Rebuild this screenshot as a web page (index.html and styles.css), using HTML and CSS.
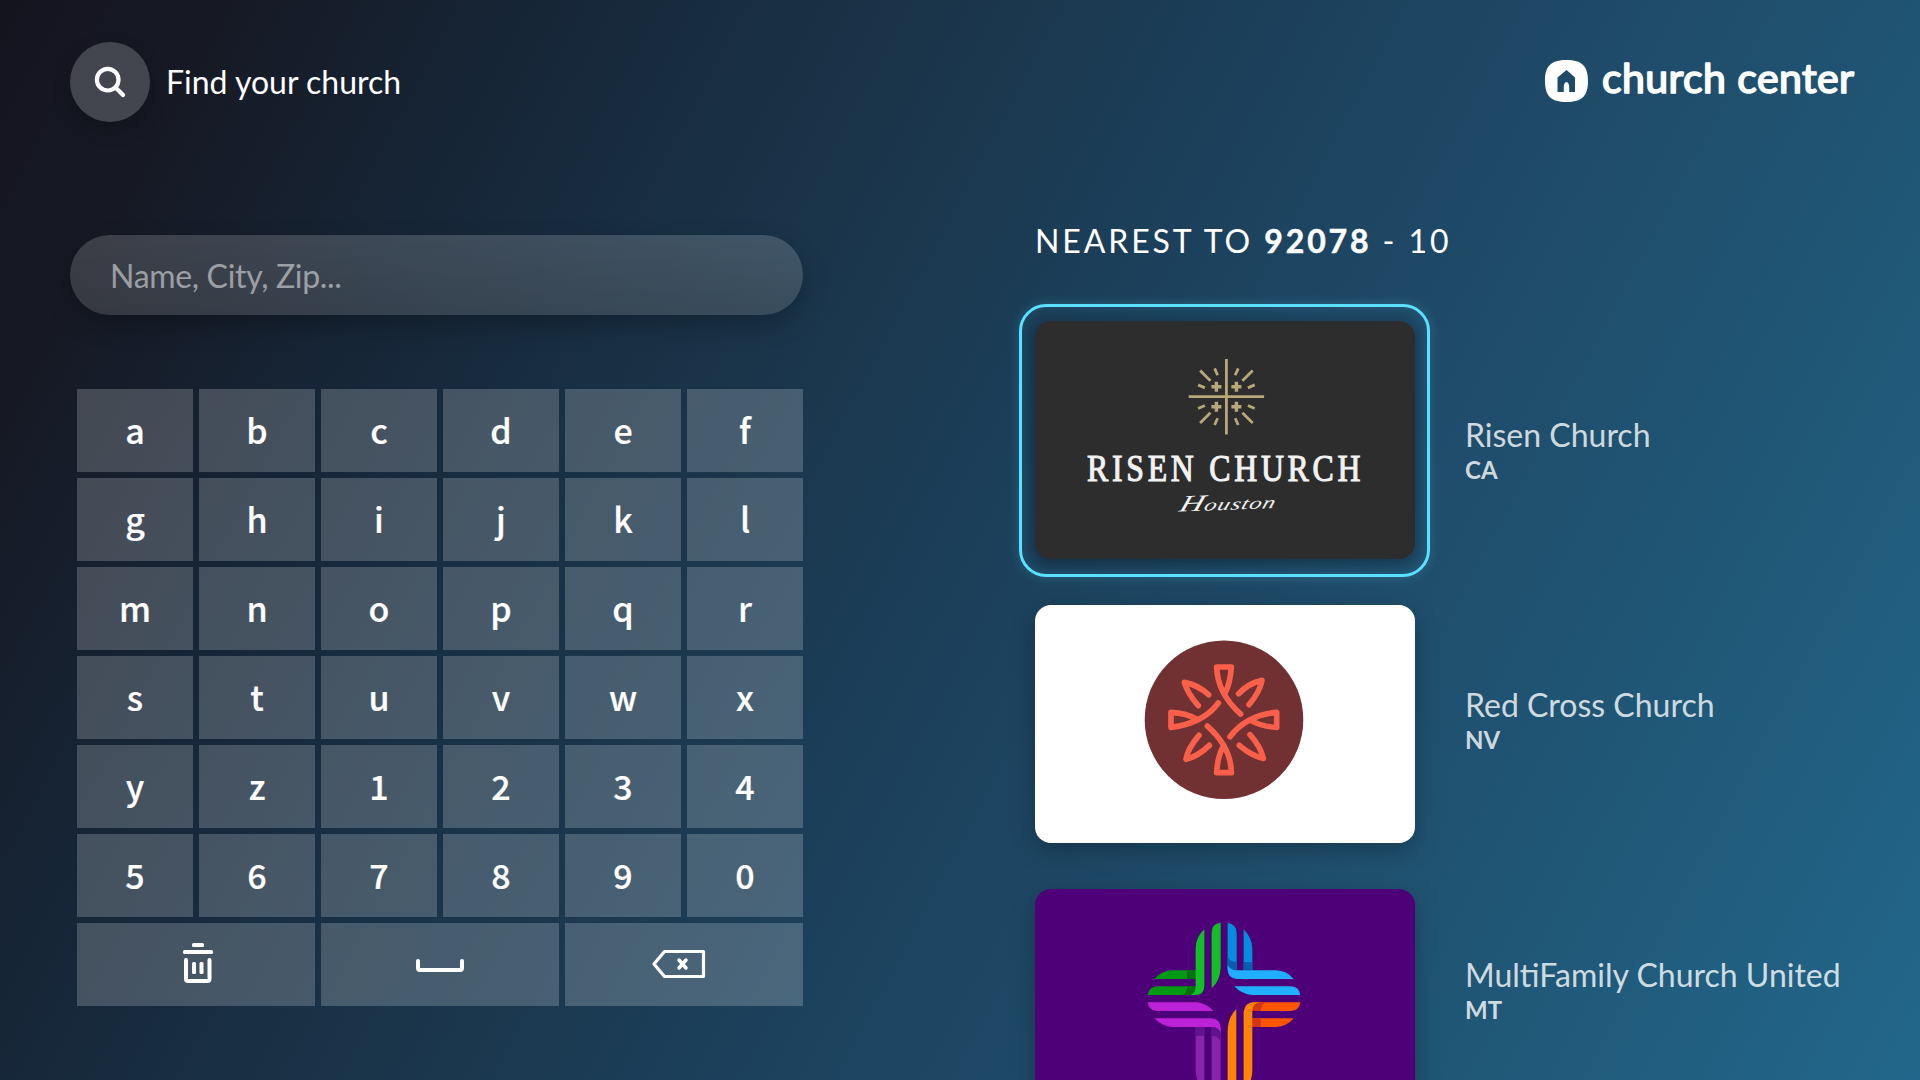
FILE: index.html
```html
<!DOCTYPE html>
<html lang="en">
<head>
<meta charset="utf-8">
<title>Find your church</title>
<link rel="stylesheet" href="styles.css">
</head>
<body>
<div class="screen">
  <header class="topbar">
    <div class="finder">
      <span class="finder-button">
        <svg width="80" height="80" viewBox="0 0 80 80" fill="none" stroke="#fff" stroke-width="4.2" stroke-linecap="round"><circle cx="37.7" cy="37.7" r="10.8"/><path d="M45.8 45.8L53 53"/></svg>
      </span>
      <span class="finder-title">Find your church</span>
    </div>
    <svg class="brand" width="312" height="44" viewBox="0 0 312 44">
      <path fill="#fff" fill-rule="evenodd" d="M21.5 0C37 0 43 6 43 21S37 42 21.500 42S0 36 0 21S6 0 21.500 0ZM21.500 10L12.500 17.500V32H18.800V26C18.800 24 20.500 22 21.500 22S24.200 24 24.200 26V32H30V17.500Z"/>
      <text class="brand-name" x="57" y="32.500" textLength="252" lengthAdjust="spacing">church center</text>
    </svg>
  </header>

  <main class="content">
    <section class="search">
      <div class="search-field">Name, City, Zip...</div>
      <div class="keyboard">
        <span class="key">a</span><span class="key">b</span><span class="key">c</span><span class="key">d</span><span class="key">e</span><span class="key">f</span>
        <span class="key">g</span><span class="key">h</span><span class="key">i</span><span class="key">j</span><span class="key">k</span><span class="key">l</span>
        <span class="key">m</span><span class="key">n</span><span class="key">o</span><span class="key">p</span><span class="key">q</span><span class="key">r</span>
        <span class="key">s</span><span class="key">t</span><span class="key">u</span><span class="key">v</span><span class="key">w</span><span class="key">x</span>
        <span class="key">y</span><span class="key">z</span><span class="key">1</span><span class="key">2</span><span class="key">3</span><span class="key">4</span>
        <span class="key">5</span><span class="key">6</span><span class="key">7</span><span class="key">8</span><span class="key">9</span><span class="key">0</span>
        <span class="key key-wide">
          <svg width="238" height="83" viewBox="0 0 238 83" fill="#fff"><rect x="115" y="20" width="12" height="4" rx="1.500"/><rect x="106" y="27" width="30" height="4" rx="1.500"/><path fill="none" stroke="#fff" stroke-width="4" stroke-linecap="round" stroke-linejoin="round" d="M109 37V56Q109 58 111 58H130.500Q132.500 58 132.500 56V37"/><rect x="115" y="39" width="4" height="12" rx="1.500"/><rect x="122.500" y="39" width="4" height="12" rx="1.500"/></svg>
        </span>
        <span class="key key-wide">
          <svg width="238" height="83" viewBox="0 0 238 83" fill="none" stroke="#fff" stroke-width="4" stroke-linecap="round" stroke-linejoin="round"><path d="M97 38V45Q97 47 99 47H139Q141 47 141 45V38"/></svg>
        </span>
        <span class="key key-wide">
          <svg width="238" height="83" viewBox="0 0 238 83" fill="none" stroke="#fff" stroke-width="3.200" stroke-linecap="round" stroke-linejoin="round"><path d="M89 41L99.500 28.500H138.500V53.500H99.500Z"/><path stroke-width="3.500" d="M114 37L121 45M121 37L114 45"/></svg>
        </span>
      </div>
    </section>

    <section class="results">
      <h1 class="results-title">NEAREST TO <b>92078</b> - 10</h1>
      <div class="results-body">
        <div class="cards">
          <div class="card card-risen card-focused">
            <svg width="380" height="238" viewBox="0 0 380 238">
              <defs>
                <g id="rays"><path stroke-width="3.400" d="M10 -15V-5M5 -10H15"/><path d="M16 -16L26.300 -26.300M8.800 -21.500L11.800 -28.300M21.500 -8.800L28.300 -11.800"/></g>
              </defs>
              <g transform="translate(191.400 75.700)" stroke="#b5a879" stroke-width="2.800">
                <path d="M0 -37.700V37.700M-37.700 0H37.700"/>
                <use href="#rays"/><use href="#rays" transform="scale(-1 1)"/><use href="#rays" transform="scale(1 -1)"/><use href="#rays" transform="scale(-1 -1)"/>
              </g>
              <text class="risen-name" transform="translate(52 160) scale(.860 1)" textLength="318" lengthAdjust="spacing">RISEN CHURCH</text>
              <text class="risen-city" transform="translate(143 190.500) rotate(-2) skewX(-20) scale(1.450 1)" textLength="66" lengthAdjust="spacing"><tspan class="risen-initial">H</tspan>ouston</text>
            </svg>
          </div>
          <div class="card card-red">
            <svg width="380" height="238" viewBox="0 0 380 238">
              <circle cx="189" cy="114.700" r="79.300" fill="#713031"/>
              <g transform="translate(189 114.700) scale(.3333) translate(-282 -269)" fill="none" stroke="#fa5f49" stroke-width="17" stroke-linecap="round" stroke-linejoin="round">
                <path d="M284 192Q301 160 304 111H260Q262 190 332 252"/>
                <path d="M203 269Q170 249 123 247V292Q220 280 265 219"/>
                <path d="M362 271Q395 290 440 292V247Q350 255 300 320"/>
                <path d="M281 347Q262 380 260 428H304Q303 350 232 288"/>
                <path d="M236 194Q205 165 163 157Q172 190 205 227"/>
                <path d="M326 191Q355 160 396 151Q390 185 357 224"/>
                <path d="M238 346Q205 378 168 388Q173 355 207 316"/>
                <path d="M328 346Q365 378 400 385Q392 350 360 314"/>
              </g>
            </svg>
          </div>
          <div class="card card-multi">
            <svg width="380" height="238" viewBox="0 0 380 238">
              <g transform="scale(.3333) translate(-45 -57)">
                <path fill="#029a14" d="M403 327Q425 301 460 301H527V327ZM383 375Q386 349 415 349H527V375Z"/>
                <path fill="#017010" d="M501 301H527V327H501ZM527 349V375H487Q501 367 502 349Z"/>
                <path fill="#10c126" d="M553 178V348Q553 375 525 375H513Q527 367 527 350V235Q527 203 553 178ZM602 158V290Q602 330 575 355V190Q575 160 602 158Z"/>
                <path fill="#008ede" d="M623 158Q650 162 650 190V301H623ZM671 178Q697 205 697 235V301H671Z"/>
                <path fill="#005fae" d="M623 260Q630 276 650 276V301H623ZM671 276H697V301H671Z"/>
                <path fill="#21aeff" d="M623 285Q630 301 650 301H768Q800 302 821 327H650Q623 325 623 298ZM643 349H812Q838 350 841 375H697Q665 373 643 349Z"/>
                <path fill="#8823ab" d="M527 471H553V660Q527 640 527 600ZM575 471H602V660H575Z"/>
                <path fill="#64118f" d="M527 471H553V497H527ZM575 471H602V515Q595 497 575 497Z"/>
                <path fill="#bb22d8" d="M383 397H530Q560 400 581 423H410Q385 420 383 397ZM403 445H575Q602 448 602 475V487Q595 471 575 471H455Q425 468 403 445Z"/>
                <path fill="#ff5500" d="M697 397H841Q838 422 812 423H697ZM697 445H821Q800 470 768 471H697Z"/>
                <path fill="#d1351b" d="M697 397H740Q724 400 722 423H697ZM697 445H722V471H697Z"/>
                <path fill="#ff8400" d="M649 417V660H623V485Q623 443 649 417ZM671 660V425Q674 397 705 397H718Q698 401 697 423V600Q697 640 671 660Z"/>
              </g>
            </svg>
          </div>
        </div>
        <div class="labels">
          <div class="label"><span class="label-name">Risen Church</span><span class="label-state">CA</span></div>
          <div class="label"><span class="label-name">Red Cross Church</span><span class="label-state">NV</span></div>
          <div class="label"><span class="label-name">MultiFamily Church United</span><span class="label-state">MT</span></div>
        </div>
      </div>
    </section>
  </main>
</div>
</body>
</html>
```
FILE: styles.css
```css
*, *::after { box-sizing: border-box; }

body {
  margin: 0;
  font-family: Lato, sans-serif;
  color: #fff;
}

.screen {
  width: 1920px;
  height: 1080px;
  overflow: hidden;
  background: linear-gradient(118deg, #14141f 0%, #161924 9%, #162536 21%, #1a3348 36%, #1c405b 52%, #1f4d6b 68%, #205675 80%, #22678b 100%);
}

svg { display: block; }

.topbar {
  display: flex;
  justify-content: space-between;
  align-items: flex-start;
  height: 235px;
  padding: 42px 63px 0 70px;
}

.finder {
  display: flex;
  align-items: center;
  gap: 16px;
}

.finder-button {
  border-radius: 50%;
  background: rgba(255, 255, 255, .2);
  box-shadow: 0 8px 20px rgba(0, 0, 0, .2);
}

.finder-title { padding-bottom: 1px; font-size: 32px; line-height: 38px; }

.brand { margin-top: 18px; overflow: visible; }

.brand-name {
  font-size: 41px;
  font-weight: 400;
  fill: #fff;
  stroke: #fff;
  stroke-width: 1.7px;
  stroke-linejoin: round;
}

.content {
  display: flex;
  padding: 0 0 0 70px;
}

.search { width: 733px; }

.search-field {
  height: 80px;
  padding: 0 40px;
  border-radius: 40px;
  background: linear-gradient(rgba(0, 0, 0, 0), rgba(0, 0, 0, .12)), rgba(255, 255, 255, .17);
  box-shadow: 0 10px 24px rgba(0, 0, 0, .25);
  font-size: 32px;
  letter-spacing: -.32px;
  line-height: 81px;
  color: rgba(255, 255, 255, .5);
}

.keyboard {
  display: grid;
  grid-template-columns: repeat(6, 116px);
  grid-auto-rows: 83px;
  gap: 6px;
  margin: 74px 0 0 7px;
}

.key {
  background: rgba(255, 255, 255, .2);
  font-family: "Noto Sans CJK SC", sans-serif;
  font-size: 34px;
  font-weight: 500;
  line-height: 81px;
  text-align: center;
  -webkit-text-stroke: .2px #fff;
}

.key-wide { grid-column: span 2; }

.results { margin: -14px 0 0 232px; }

.results-title {
  margin: 0;
  font-size: 32px;
  font-weight: 400;
  line-height: 40px;
  letter-spacing: 2.9px;
  white-space: nowrap;
}

.results-title b { font-weight: 700; -webkit-text-stroke: .5px #fff; }

.results-body {
  display: flex;
  gap: 50px;
  margin-top: 60px;
}

.cards {
  display: flex;
  flex-direction: column;
  gap: 46px;
}

.card {
  width: 380px;
  height: 238px;
  border-radius: 16px;
  box-shadow: 0 8px 24px rgba(0, 0, 0, .25);
}

.card-focused {
  position: relative;
  box-shadow: 0 4px 14px rgba(0, 0, 0, .3);
}

.card-focused::after {
  content: "";
  position: absolute;
  top: -17px;
  left: -16px;
  width: 411px;
  height: 273px;
  border: 3px solid #5be1ff;
  border-radius: 27px;
  box-shadow: 0 0 12px rgba(91, 225, 255, .2), inset 0 0 12px rgba(91, 225, 255, .12);
}

.card-risen { background: #2d2d2d; }
.card-red { background: #fff; }
.card-multi { background: #4e0079; }

.risen-name {
  font-family: "Liberation Serif", serif;
  font-size: 37px;
  fill: #f2f2f2;
  stroke: #f2f2f2;
  stroke-width: 1.1px;
}

.risen-city {
  font-family: "Liberation Serif", serif;
  font-size: 17px;
  font-style: italic;
  fill: #f2f2f2;
}

.risen-initial { font-size: 23px; }

.labels {
  display: flex;
  flex-direction: column;
  padding-top: 94px;
}

.label {
  display: flex;
  flex-direction: column;
  height: 270px;
  color: rgba(255, 255, 255, .8);
}

.label-name { font-size: 32px; line-height: 40px; white-space: nowrap; }
.label-state { font-size: 24px; font-weight: 700; line-height: 29px; }
```
